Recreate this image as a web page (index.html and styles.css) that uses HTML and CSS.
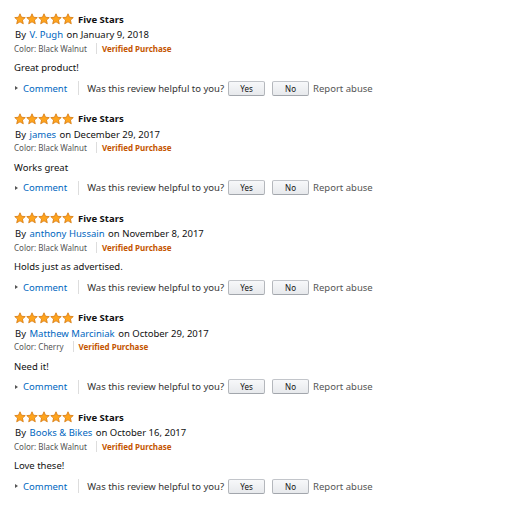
FILE: index.html
```html
<!DOCTYPE html>
<html>
<head>
<meta charset="utf-8">
<link rel="stylesheet" href="styles.css">
</head>
<body>
<svg width="0" height="0" class="defs">
  <defs>
    <symbol id="star" viewBox="0 0 24 24">
      <path d="M12 1.6l3.1 6.9 7.4.7-5.6 5 1.7 7.4L12 17.7l-6.6 3.9 1.7-7.4-5.6-5 7.4-.7z" fill="#ffa41c" stroke="#d5780f" stroke-width="1.6" stroke-linejoin="round"/>
    </symbol>
  </defs>
</svg>
<div class="reviews">
  <div class="review">
    <div class="title-row">
      <span class="stars"><svg><use href="#star"/></svg><svg><use href="#star"/></svg><svg><use href="#star"/></svg><svg><use href="#star"/></svg><svg><use href="#star"/></svg></span>
      <span class="title">Five Stars</span>
    </div>
    <div class="by">By <a class="author">V. Pugh</a> on January 9, 2018</div>
    <div class="meta"><span class="color">Color: Black Walnut</span><span class="sep"></span><span class="verified">Verified Purchase</span></div>
    <div class="body">Great product!</div>
    <div class="actions"><span class="bullet"></span><a class="comment">Comment</a><span class="sep tall"></span><span class="helpful">Was this review helpful to you?</span><button class="btn">Yes</button><button class="btn">No</button><span class="report">Report abuse</span></div>
  </div>
  <div class="review">
    <div class="title-row">
      <span class="stars"><svg><use href="#star"/></svg><svg><use href="#star"/></svg><svg><use href="#star"/></svg><svg><use href="#star"/></svg><svg><use href="#star"/></svg></span>
      <span class="title">Five Stars</span>
    </div>
    <div class="by">By <a class="author">james</a> on December 29, 2017</div>
    <div class="meta"><span class="color">Color: Black Walnut</span><span class="sep"></span><span class="verified">Verified Purchase</span></div>
    <div class="body">Works great</div>
    <div class="actions"><span class="bullet"></span><a class="comment">Comment</a><span class="sep tall"></span><span class="helpful">Was this review helpful to you?</span><button class="btn">Yes</button><button class="btn">No</button><span class="report">Report abuse</span></div>
  </div>
  <div class="review">
    <div class="title-row">
      <span class="stars"><svg><use href="#star"/></svg><svg><use href="#star"/></svg><svg><use href="#star"/></svg><svg><use href="#star"/></svg><svg><use href="#star"/></svg></span>
      <span class="title">Five Stars</span>
    </div>
    <div class="by">By <a class="author">anthony Hussain</a> on November 8, 2017</div>
    <div class="meta"><span class="color">Color: Black Walnut</span><span class="sep"></span><span class="verified">Verified Purchase</span></div>
    <div class="body">Holds just as advertised.</div>
    <div class="actions"><span class="bullet"></span><a class="comment">Comment</a><span class="sep tall"></span><span class="helpful">Was this review helpful to you?</span><button class="btn">Yes</button><button class="btn">No</button><span class="report">Report abuse</span></div>
  </div>
  <div class="review">
    <div class="title-row">
      <span class="stars"><svg><use href="#star"/></svg><svg><use href="#star"/></svg><svg><use href="#star"/></svg><svg><use href="#star"/></svg><svg><use href="#star"/></svg></span>
      <span class="title">Five Stars</span>
    </div>
    <div class="by">By <a class="author">Matthew Marciniak</a> on October 29, 2017</div>
    <div class="meta"><span class="color">Color: Cherry</span><span class="sep"></span><span class="verified">Verified Purchase</span></div>
    <div class="body">Need it!</div>
    <div class="actions"><span class="bullet"></span><a class="comment">Comment</a><span class="sep tall"></span><span class="helpful">Was this review helpful to you?</span><button class="btn">Yes</button><button class="btn">No</button><span class="report">Report abuse</span></div>
  </div>
  <div class="review">
    <div class="title-row">
      <span class="stars"><svg><use href="#star"/></svg><svg><use href="#star"/></svg><svg><use href="#star"/></svg><svg><use href="#star"/></svg><svg><use href="#star"/></svg></span>
      <span class="title">Five Stars</span>
    </div>
    <div class="by">By <a class="author">Books &amp; Bikes</a> on October 16, 2017</div>
    <div class="meta"><span class="color">Color: Black Walnut</span><span class="sep"></span><span class="verified">Verified Purchase</span></div>
    <div class="body">Love these!</div>
    <div class="actions"><span class="bullet"></span><a class="comment">Comment</a><span class="sep tall"></span><span class="helpful">Was this review helpful to you?</span><button class="btn">Yes</button><button class="btn">No</button><span class="report">Report abuse</span></div>
  </div>
</div>
</body>
</html>
```
FILE: styles.css
```css
html, body {
  margin: 0;
  padding: 0;
  background: #fff;
}
body {
  font-family: "Noto Sans", "Liberation Sans", Arial, sans-serif;
  color: #111;
  font-size: 9.5px;
}
.defs {
  position: absolute;
  width: 0;
  height: 0;
}
.reviews {
  padding: 12px 0 0 14px;
  display: flex;
  flex-direction: column;
  gap: 15.5px;
}
.review {
  display: flex;
  flex-direction: column;
}
.title-row {
  display: flex;
  align-items: center;
  height: 14px;
}
.stars {
  display: flex;
  width: 60px;
}
.stars svg {
  width: 12px;
  height: 12px;
}
.title {
  font-weight: bold;
  margin-left: 4px;
}
.by {
  height: 15px;
  padding-top: 1px;
  line-height: 16px;
  padding-left: 1px;
}
.author {
  margin: 0 1px;
}
.author, .comment {
  color: #0066c0;
}
.meta {
  display: flex;
  align-items: center;
  height: 12px;
  padding-bottom: 2px;
  font-size: 8px;
}
.color {
  color: #555;
}
.sep {
  width: 1px;
  height: 11px;
  background: #ddd;
  margin: 0 5px 0 9px;
}
.verified {
  color: #c45500;
  font-weight: bold;
}
.body {
  margin-top: 5px;
  height: 14px;
  line-height: 14px;
}
.actions {
  margin-top: 5px;
  display: flex;
  align-items: center;
  height: 16px;
}
.bullet {
  width: 0;
  height: 0;
  border-left: 3px solid #555;
  border-top: 2.5px solid transparent;
  border-bottom: 2.5px solid transparent;
  margin: 0 5px 0 1px;
}
.sep.tall {
  height: 14px;
  margin: 0 8px 0 11px;
}
.helpful {
  color: #333;
}
.btn {
  font-family: inherit;
  font-size: 8px;
  color: #111;
  width: 37px;
  height: 15px;
  padding: 0;
  margin-left: 4px;
  border: 1px solid #adb1b8;
  border-color: #c2c5ca #b4b7bc #a2a6ac;
  border-radius: 2px;
  background: linear-gradient(#f7f8fa, #e7e9ec);
}
.btn + .btn {
  margin-left: 7px;
}
.report {
  margin-left: 4px;
  color: #555;
}
```
